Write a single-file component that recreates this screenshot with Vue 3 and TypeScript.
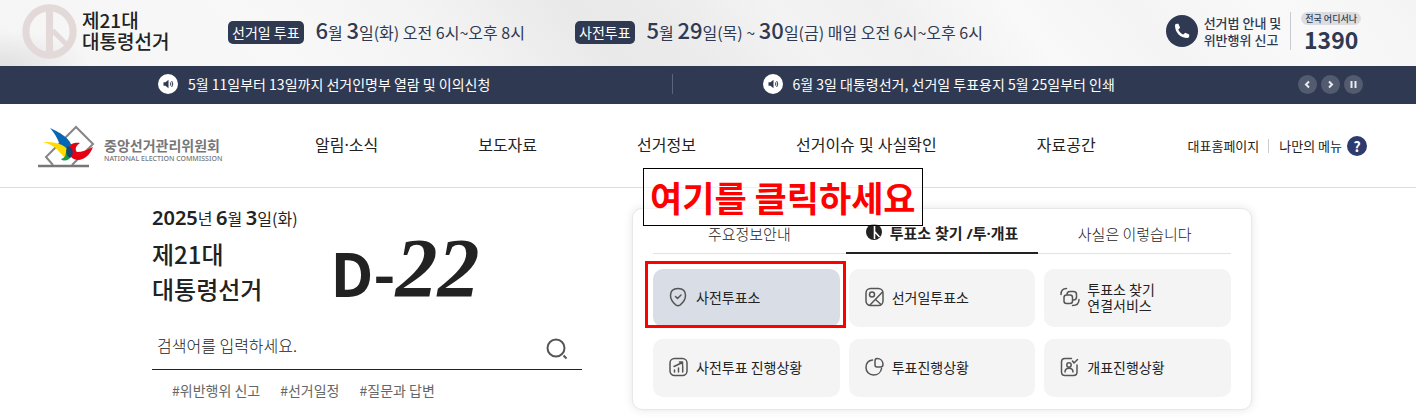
<script setup lang="ts">
import { ref } from 'vue'

interface Notice { id: number; text: string }
interface Tile { id: string; lines: string[]; active?: boolean }

const notices: Notice[] = [
  { id: 1, text: '5월 11일부터 13일까지 선거인명부 열람 및 이의신청' },
  { id: 2, text: '6월 3일 대통령선거, 선거일 투표용지 5월 25일부터 인쇄' },
]
const menus: string[] = ['알림·소식', '보도자료', '선거정보', '선거이슈 및 사실확인', '자료공간']
const tags: string[] = ['#위반행위 신고', '#선거일정', '#질문과 답변']
const tabs: string[] = ['주요정보안내', '투표소 찾기 /투·개표', '사실은 이렇습니다']
const tiles: Tile[] = [
  { id: 'shield', lines: ['사전투표소'], active: true },
  { id: 'ballot', lines: ['선거일투표소'] },
  { id: 'link', lines: ['투표소 찾기', '연결서비스'] },
  { id: 'chart', lines: ['사전투표 진행상황'] },
  { id: 'pie', lines: ['투표진행상황'] },
  { id: 'person', lines: ['개표진행상황'] },
]
const activeTab = ref(1)
const keyword = ref('')
</script>

<template>
  <div class="page">
    <section class="banner">
      <div class="election">
        <svg class="mark" viewBox="0 0 54 54" aria-hidden="true">
          <circle cx="27" cy="27" r="23.200" />
          <path d="M27 5v44" />
          <path class="thin" d="M30 26l13 13" />
        </svg>
        <strong>제21대<br />대통령선거</strong>
      </div>
      <p class="schedule day">
        <span class="badge">선거일 투표</span>
        <span><b>6</b>월 <b>3</b>일(화) 오전 6시~오후 8시</span>
      </p>
      <p class="schedule early">
        <span class="badge">사전투표</span>
        <span><b>5</b>월 <b>29</b>일(목) ~ <b>30</b>일(금) 매일 오전 6시~오후 6시</span>
      </p>
      <a class="report" href="#report">
        <svg class="phone" viewBox="0 0 32 32" aria-hidden="true">
          <circle cx="16" cy="16" r="16" />
          <path d="M9 10.500c0-1 .8-1.700 1.900-1.700h1.500l1.700 4-1.800 1.700c1 2.400 2.600 4 5 5l1.900-1.800 4 1.800v1.600c0 1.200-.8 1.900-1.800 1.900C14.500 23 9 17.500 9 10.500z" />
        </svg>
        <span class="guide">선거법 안내 및<br />위반행위 신고</span>
        <span class="call"><small>전국 어디서나</small><strong>1390</strong></span>
      </a>
    </section>

    <section class="ticker">
      <ul>
        <li v-for="n in notices" :key="n.id">
          <svg viewBox="0 0 20 20" aria-hidden="true">
            <circle cx="10" cy="10" r="10" fill="#fff" />
            <path d="M5.500 8.300h2L10.500 5.800v8.400L7.500 11.700h-2z" fill="#2f3a52" />
            <path d="M12.300 8.400q1.200 1.600 0 3.200M13.700 7q2.200 3 0 6" fill="none" stroke="#2f3a52" />
          </svg>
          <a href="#notice">{{ n.text }}</a>
        </li>
      </ul>
      <div class="controls">
        <button type="button" aria-label="이전"><svg viewBox="0 0 19 19"><path d="M11 6.500l-3 3 3 3" /></svg></button>
        <button type="button" aria-label="다음"><svg viewBox="0 0 19 19"><path d="M8 6.500l3 3-3 3" /></svg></button>
        <button type="button" aria-label="정지"><svg viewBox="0 0 19 19"><path d="M7.500 6v7M11.500 6v7" /></svg></button>
      </div>
    </section>

    <header class="header">
      <a class="logo" href="#home">
        <svg viewBox="0 0 58 44" aria-hidden="true">
          <path d="M16 41L9 33 39 3l17 17-21 21" fill="none" stroke="#858585" stroke-width="2" />
          <path d="M1 42h51" stroke="#777" stroke-width="2.500" />
          <path d="M13 4C24 9 37 16 35 28q-1 5-5 5C22 28 26 19 13 4z" fill="#0766b4" />
          <path d="M6 18c11 0 22 1 26 10l-1 7C23 32 22 22 6 18z" fill="#ffdb00" />
          <path d="M24 35c7-1 3-9 8-13 3-3 6-3 10-3-7 3-5 12-10 16-3 2-6 2-8 0z" fill="#169b48" />
          <path d="M30 26c3-6 7-8 13-7-5 3-5 7-3 9 5 0 10-2 16-5-3 8-9 13-15 13-5 0-9-4-11-10z" fill="#e60012" />
          <path d="M31 22c6 3 6 8 2 12-4-2-5-8-2-12z" fill="#164573" />
        </svg>
        <span class="logo-text"><strong>중앙선거관리위원회</strong><small>NATIONAL ELECTION COMMISSION</small></span>
      </a>
      <nav>
        <a v-for="m in menus" :key="m" href="#menu">{{ m }}</a>
      </nav>
      <div class="utility">
        <a href="#main">대표홈페이지</a>
        <a href="#my">나만의 메뉴</a>
        <button type="button" aria-label="도움말">?</button>
      </div>
    </header>

    <main>
      <section class="intro">
        <p class="date"><b>2025</b>년 <b>6</b>월 <b>3</b>일(화)</p>
        <div class="count">
          <h1>제21대<br />대통령선거</h1>
          <p class="dday">D-<em>22</em></p>
        </div>
        <form class="search" @submit.prevent>
          <input v-model="keyword" type="text" aria-label="검색어" placeholder="검색어를 입력하세요." />
          <button type="submit" aria-label="검색">
            <svg viewBox="0 0 24 24"><circle cx="11" cy="11" r="8.500" /><path d="M18.500 18.500l3 3" /></svg>
          </button>
        </form>
        <div class="tags"><a v-for="t in tags" :key="t" href="#tag">{{ t }}</a></div>
      </section>

      <section class="panel">
        <div class="tabs" role="tablist">
          <button v-for="(t, i) in tabs" :key="t" type="button" role="tab" :aria-selected="activeTab === i" :class="{ on: activeTab === i }" @click="activeTab = i">
            <svg v-if="i === 1" viewBox="0 0 16 16" aria-hidden="true">
              <circle cx="8" cy="8" r="8" fill="#222" />
              <path d="M8.500 1v14M8.500 7.500l5 5.500" stroke="#fff" stroke-width="1.600" />
            </svg>
            {{ t }}
          </button>
        </div>
        <div class="tiles">
          <a v-for="t in tiles" :key="t.id" href="#tile" class="tile" :class="{ active: t.active }">
            <svg viewBox="0 0 20 20" aria-hidden="true">
              <template v-if="t.id === 'shield'">
                <path d="M9 1.500c4 0 7.500 2 7.500 7 0 4.500-3.500 8-5.500 9.600q-2 1.200-4 0C5 16.500 1.500 13 1.500 8.500c0-5 3.500-7 7.500-7z" />
                <path d="M6.500 9.500l2 2 3.500-3.500" />
              </template>
              <template v-else-if="t.id === 'ballot'">
                <rect x="1" y="1.500" width="17" height="17" rx="4.500" />
                <circle cx="7" cy="7.500" r="2.500" />
                <path d="M17.500 5L5 18M10.500 12.500l5.500 5" />
              </template>
              <template v-else-if="t.id === 'link'">
                <rect x="4" y="8" width="8.500" height="8.500" rx="2.500" />
                <path d="M7 7.500c0-2 1-3 3-3h3.500c2 0 3 1 3 3V10c0 2-1 3-3 3M1 7.500c0-4 2-6 5.500-6M19 12.500c0 4-2 6-6.500 6" />
              </template>
              <template v-else-if="t.id === 'chart'">
                <rect x="1" y="1.500" width="17" height="17" rx="4.500" />
                <path d="M5.500 15v-2M9.500 15v-4M13.700 15V9M5 9.500l8.500-4M10.500 5h3v3" />
              </template>
              <template v-else-if="t.id === 'pie'">
                <path d="M7.500 3C3 3.500 1 7 1 10.500c0 4 3 7.500 7.500 7.500 4 0 7.500-2.500 8-6.500M10 4c0-2 .5-2.500 2-2.500 3.500 0 6 2.500 6 6 0 2-.5 2.500-2.500 2.500H12c-1.500 0-2-.5-2-2z" />
              </template>
              <template v-else>
                <path d="M11.500 1.500H5c-2.500 0-3.500 1-3.500 3.500v10c0 2.500 1 3.500 3.500 3.500h8.500c2.500 0 3.500-1 3.500-3.500V8" />
                <circle cx="9" cy="8" r="2.200" />
                <path d="M5 15c0-5 8-5 8 0M12.500 4l1.500 2 3.500-3.500" />
              </template>
            </svg>
            <span><template v-for="(line, i) in t.lines" :key="line"><br v-if="i" />{{ line }}</template></span>
          </a>
        </div>
        <strong class="callout">여기를 클릭하세요</strong>
      </section>
    </main>
  </div>
</template>

<style>
body { margin: 0; background: #fff; }
</style>

<style scoped>
.page { font-family: "Noto Sans CJK KR", "Noto Sans", sans-serif; color: #222; overflow: hidden; }
* { box-sizing: border-box; }
a { color: inherit; text-decoration: none; }
p, h1, ul { margin: 0; padding: 0; }
button { font: inherit; color: inherit; border: 0; padding: 0; background: none; cursor: pointer; }
svg { flex: none; display: block; }

.banner {
  display: flex; align-items: center; height: 66px; padding: 0 55px 4px 22px;
  color: #2f3a52; white-space: nowrap;
  background:
    radial-gradient(ellipse 90px 36px at 0 100%, #e0e0e0, transparent),
    linear-gradient(50deg, #f5f5f5 0%, #f8f8f8 20%, #f3f3f3 32%, #e9e9e9 42%, #ebebeb 48%, #f3f3f3 56%, #f0f0f0 63%, #f9f9f9 72%, #f4f4f4 80%, #f9f9f9 90%, #f4f4f4 100%);
}
.election { display: flex; align-items: center; gap: 5px; width: 206px; color: #222; }
.mark { width: 55px; height: 55px; fill: none; stroke: #e3d9d9; stroke-width: 7; }
.mark .thin { stroke-width: 5; }
.election strong { padding-bottom: 2px; font-size: 19px; line-height: 21px; font-weight: 500; }
.schedule { display: flex; align-items: center; gap: 12px; font-size: 16px; line-height: 32px; }
.schedule span + span { padding-bottom: 2px; }
.schedule b { font-size: 22px; font-weight: 500; }
.badge { height: 23px; margin-top: 2px; padding: 0 4px; border-radius: 5px; background: #2f3a52; color: #fff; font-size: 14px; line-height: 22px; }
.day { width: 347px; }
.report { display: flex; align-items: center; margin-left: auto; }
.phone { width: 32px; height: 32px; fill: #2f3a52; margin-right: 6px; }
.phone path { fill: #fff; }
.guide { font-size: 13px; line-height: 17px; font-weight: 500; }
.call { display: flex; flex-direction: column; align-items: center; gap: 4px; margin-left: 9px; padding-left: 10px; border-left: 1px solid #c9cbd0; }
.call small { padding: 0 4px; border-radius: 7px; background: #dcdde1; font-size: 9px; line-height: 13px; font-weight: 500; }
.call strong { font-size: 23px; line-height: 21px; }

.ticker { display: flex; align-items: center; height: 38px; padding: 0 53px 2px 68px; background: #2f3a52; color: #fff; }
.ticker ul { display: flex; flex: 1; list-style: none; }
.ticker li { display: flex; flex: 1; align-items: center; gap: 10px; padding-left: 90px; font-size: 14px; line-height: 20px; white-space: nowrap; }
.ticker li + li { border-left: 1px solid #5b647a; }
.ticker li svg { width: 20px; height: 20px; }
.controls { display: flex; gap: 4px; margin-left: 22px; }
.controls button { width: 19px; height: 19px; border-radius: 50%; background: #525b70; }
.controls svg { fill: none; stroke: #e9ebef; stroke-width: 2; }

.header { display: flex; align-items: center; height: 84px; padding: 0 49px 0 37px; border-bottom: 1px solid #ddd; white-space: nowrap; }
.logo { display: flex; align-items: center; gap: 9px; width: 278px; }
.logo svg { width: 58px; height: 44px; }
.logo-text { display: flex; flex-direction: column; padding-top: 8px; color: #777; }
.logo-text strong { font-size: 14px; line-height: 18px; font-weight: 700; }
.logo-text small { font-family: "Noto Sans", sans-serif; font-size: 7px; line-height: 10px; font-weight: 500; }
nav { display: flex; gap: 100px; padding-bottom: 1px; font-family: "Noto Sans", "Noto Sans CJK KR", sans-serif; font-size: 16px; line-height: 24px; }
.utility { display: flex; align-items: center; margin-left: auto; font-size: 13px; line-height: 14px; }
.utility a + a { margin-left: 9px; padding-left: 10px; border-left: 1px solid #ccc; }
.utility button { width: 20px; height: 20px; margin-left: 5px; border-radius: 50%; background: #2d3b6e; color: #fff; font-size: 14px; line-height: 20px; font-weight: 700; }

main { display: flex; justify-content: space-between; padding: 20px 164px 8px 152px; }
.intro { width: 430px; }
.date { font-size: 16px; line-height: 20px; }
.date b { font-family: "Noto Sans", sans-serif; font-size: 20px; font-weight: 600; }
.count { display: flex; align-items: center; gap: 68px; height: 86px; }
h1 { font-size: 24px; line-height: 35px; font-weight: 500; white-space: nowrap; }
.dday { padding-bottom: 2px; font-size: 60px; line-height: 80px; font-weight: 700; white-space: nowrap; }
.dday em { font-family: "Liberation Serif", serif; font-size: 84px; line-height: 80px; font-weight: 700; }
.search { display: flex; align-items: center; height: 50px; margin-top: 6px; border-bottom: 1px solid #222; }
.search input { flex: 1; min-width: 0; padding: 0 5px; border: 0; outline: 0; background: none; font: inherit; font-size: 16px; line-height: 24px; font-weight: 300; }
.search input::placeholder { color: #222; opacity: 1; }
.search button { margin: 8px 13px 0 0; }
.search svg { width: 24px; height: 24px; fill: none; stroke: #555; stroke-width: 2; }
.tags { display: flex; gap: 20px; padding: 10px 20px 0; font-size: 14px; line-height: 20px; color: #666; }

.panel { position: relative; width: 620px; height: 202px; padding: 5px 20px 12px; border: 1px solid #e8e8e8; border-radius: 10px; background: #fff; box-shadow: 0 0 10px rgba(0, 0, 0, .1); }
.tabs { display: grid; grid-template-columns: repeat(3, 1fr); height: 40px; }
.tabs button { display: flex; align-items: center; justify-content: center; gap: 8px; border-bottom: 1px solid #e3e3e3; font-size: 15px; font-weight: 300; white-space: nowrap; }
.tabs .on { padding-bottom: 2px; border-bottom: 2px solid #222; font-family: "Noto Sans", "Noto Sans CJK KR", sans-serif; font-weight: 700; }
.tabs svg { width: 16px; height: 16px; }
.tiles { display: grid; grid-template-columns: repeat(3, 1fr); gap: 12px 9px; margin-top: 15px; }
.tile { position: relative; display: flex; align-items: center; gap: 7px; height: 58px; padding: 0 0 2px 16px; border-radius: 10px; background: #f4f4f4; font-size: 14px; line-height: 16px; }
.tile svg { width: 20px; height: 20px; fill: none; stroke: #555; stroke-width: 1.500; stroke-linecap: round; stroke-linejoin: round; }
.tile.active { background: #d9dde5; }
.tile.active::after { content: ""; position: absolute; inset: -8px -6px -1px -8px; border: 3px solid #f00; }
.callout { position: absolute; top: -41px; left: 10px; padding: 0 6px; border: 1px solid #000; background: rgba(255, 255, 255, .6); color: #f00; font-size: 35px; line-height: 56px; font-weight: 700; white-space: nowrap; }
</style>
